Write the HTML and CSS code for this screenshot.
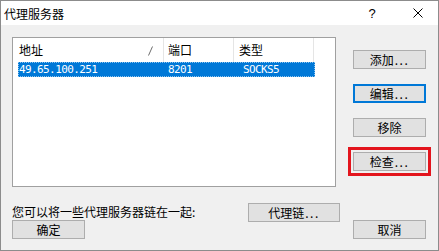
FILE: index.html
```html
<!DOCTYPE html>
<html lang="zh-CN">
<head>
    <meta charset="UTF-8">
    <title>代理服务器</title>
    <link rel="stylesheet" href="styles.css">
</head>
<body>
    <div id="dialog">
        <div id="titlebar">
            <div class="title">代理服务器</div>
            <div class="cap-help">?</div>
            <div class="cap-close">
                <svg width="10" height="10" viewBox="0 0 10 10">
                    <path d="M0.5 0.5L9.5 9.5M9.5 0.5L0.5 9.5" stroke="#000" stroke-width="1" fill="none"/>
                </svg>
            </div>
        </div>
        <div id="content">
            <div class="left">
                <div class="listbox">
                    <div class="list-head">
                        <div class="hcell hc1">
                            <span>地址</span>
                            <svg class="sort" width="5" height="10" viewBox="0 0 5 10">
                                <path d="M0.5 9.5L4.5 0.5" stroke="#6d6d6d" stroke-width="1" fill="none"/>
                            </svg>
                        </div>
                        <div class="hcell hc2">端口</div>
                        <div class="hcell hc3">类型</div>
                    </div>
                    <div class="list-row selected">
                        <div class="rcell rc1">49.65.100.251</div>
                        <div class="rcell rc2">8201</div>
                        <div class="rcell rc3">SOCKS5</div>
                    </div>
                </div>
                <div class="chain-row">
                    <div class="label">您可以将一些代理服务器链在一起:</div>
                    <div class="btn btn-chain">代理链<span class="dots">...</span></div>
                </div>
                <div class="btn btn-ok">确定</div>
            </div>
            <div class="right">
                <div class="btn">添加<span class="dots">...</span></div>
                <div class="btn default">编辑<span class="dots">...</span></div>
                <div class="btn">移除</div>
                <div class="btn marked">检查<span class="dots">...</span></div>
                <div class="btn btn-cancel">取消</div>
            </div>
        </div>
    </div>
</body>
</html>
```

FILE: styles.css
```css
body {
    margin: 0;
    font-family: "Noto Sans CJK SC", "Noto Sans", sans-serif;
    font-size: 12px;
    color: #000;
}

#dialog {
    width: 439px;
    height: 251px;
    box-sizing: border-box;
    border: 1px solid #8c8c8c;
    background: #f0f0f0;
    display: flex;
    flex-direction: column;
}

#titlebar {
    height: 24px;
    background: #fff;
    display: flex;
    align-items: center;
    padding-top: 2px;
    box-sizing: border-box;
}

.title {
    flex: 1;
    padding-left: 3px;
    line-height: 16px;
}

.cap-help {
    width: 52px;
    text-align: center;
    font-family: "Liberation Sans", sans-serif;
    font-size: 13px;
    line-height: 16px;
}

.cap-close {
    width: 40px;
    display: flex;
    justify-content: center;
    margin-top: -2px;
}

#content {
    display: grid;
    grid-template-columns: 328px 73px;
    column-gap: 13px;
    padding: 12px 0 0 11px;
}

.left {
    display: flex;
    flex-direction: column;
}

.listbox {
    width: 324px;
    height: 150px;
    box-sizing: border-box;
    border: 1px solid #a0a0a0;
    background: #fff;
}

.list-head {
    display: flex;
    height: 24px;
}

.hcell {
    box-sizing: border-box;
    border-right: 1px solid #e5e5e5;
    display: flex;
    align-items: center;
    line-height: 16px;
}

.hc1 {
    width: 151px;
    padding-left: 6px;
    justify-content: space-between;
}

.sort {
    margin-right: 10px;
    margin-top: 1px;
}

.hc2 {
    width: 70px;
    padding-left: 4px;
}

.hc3 {
    width: 80px;
    padding-left: 5px;
}

.list-row {
    display: flex;
    height: 15px;
    margin-left: 5px;
    width: 297px;
    font-family: "DejaVu Sans Mono", monospace;
    font-size: 11px;
    letter-spacing: -0.6px;
    line-height: 16px;
}

.list-row.selected {
    background: #0078d7;
    color: #fff;
    outline: 1px dotted #8cc4ef;
    outline-offset: -1px;
}

.rc1 {
    width: 150px;
    padding-left: 1px;
    box-sizing: border-box;
}

.rc2 {
    width: 75px;
}

.chain-row {
    display: flex;
    align-items: center;
    justify-content: space-between;
    margin-top: 16px;
}

.label {
    line-height: 16px;
    margin-top: -1px;
}

.btn {
    width: 73px;
    height: 19px;
    box-sizing: border-box;
    border: 1px solid #adadad;
    background: #e1e1e1;
    text-align: center;
    line-height: 17px;
}

.dots {
    letter-spacing: 1.5px;
    margin-left: 1px;
}

.btn-chain {
    width: 92px;
}

.btn-ok {
    margin-top: -2px;
}

.btn.default {
    border-color: #0078d7;
    box-shadow: inset 0 0 0 1px #0078d7;
}

.btn.marked {
    outline: 3px solid #e3151d;
    outline-offset: 2px;
}

.right {
    display: flex;
    flex-direction: column;
    gap: 15px;
    padding-top: 13px;
}

.btn-cancel {
    margin-top: auto;
}
```
